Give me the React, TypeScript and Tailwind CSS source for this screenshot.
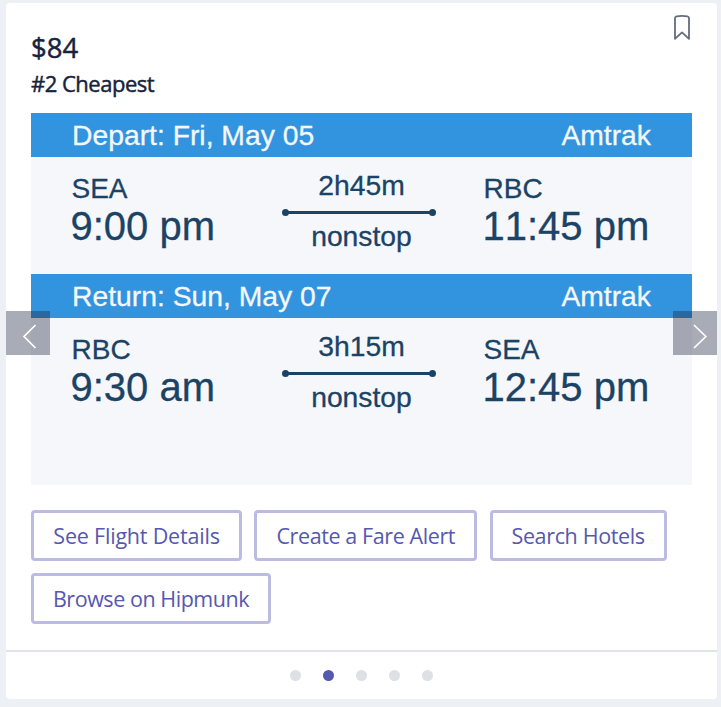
type Leg = {
  title: string;
  from: string;
  departs: string;
  to: string;
  arrives: string;
  duration: string;
};

const legs: Leg[] = [
  { title: "Depart: Fri, May 05", from: "SEA", departs: "9:00 pm", to: "RBC", arrives: "11:45 pm", duration: "2h45m" },
  { title: "Return: Sun, May 07", from: "RBC", departs: "9:30 am", to: "SEA", arrives: "12:45 pm", duration: "3h15m" },
];

const actions = [
  { label: "See Flight Details", box: "w-[211px]", text: "tracking-[-0.2px]" },
  { label: "Create a Fare Alert", box: "w-[223px]", text: "tracking-[-0.4px]" },
  { label: "Search Hotels", box: "w-[177px]", text: "tracking-[-0.35px]" },
  { label: "Browse on Hipmunk", box: "w-[240px]", text: "tracking-[-0.45px]" },
];

function Place({ code, time }: { code: string; time: string }) {
  return (
    <div className="pt-[17px]">
      <div className="pl-px text-[28px] leading-[30px]">{code}</div>
      <div className="mt-[2px] text-[40px] leading-[40px] [font-kerning:none]">{time}</div>
    </div>
  );
}

function LegSection({ leg }: { leg: Leg }) {
  return (
    <section className="h-[161px] whitespace-nowrap text-[#1b4365] [-webkit-text-stroke:0.3px]">
      <header className="flex h-11 items-center justify-between bg-[#3294de] pl-[41px] pr-[41px] text-[28.3px] leading-[44px] text-[#f4f8fc]">
        <span>{leg.title}</span>
        <span>Amtrak</span>
      </header>
      <div className="grid grid-cols-[211.5px_153px_1fr] pl-[39.5px]">
        <Place code={leg.from} time={leg.departs} />
        <div className="flex flex-col items-center pt-[14px] text-[28.3px] leading-[28px]">
          <span className="pl-[6px]">{leg.duration}</span>
          <div className="mb-[6px] mt-[10px] flex h-[7px] w-[154px] items-center">
            <span className="size-[7px] rounded-full bg-current" />
            <span className="-mx-px h-[3px] flex-1 bg-current" />
            <span className="size-[7px] rounded-full bg-current" />
          </div>
          <span className="pl-[6px]">nonstop</span>
        </div>
        <div className="pl-[47.5px]">
          <Place code={leg.to} time={leg.arrives} />
        </div>
      </div>
    </section>
  );
}

export default function App() {
  return (
    <main className="h-[707px] w-[721px] bg-[#edf0f5] pl-[6px] pt-[3px] font-['Open_Sans','Noto_Sans',sans-serif]">
      <article className="relative flex h-[696px] w-[711px] flex-col rounded-[4px] bg-white">
        <div className="flex h-[110px] justify-between pl-[25px] pr-[26px] text-[#16233a]">
          <div className="pt-[27px] [-webkit-text-stroke:0.45px]">
            <h1 className="text-[27.5px] leading-[36px]">$84</h1>
            <h2 className="text-[22px] leading-[34px] tracking-[-0.5px]">#2 Cheapest</h2>
          </div>
          <svg className="mt-[11px] h-[27px] w-[18px]" viewBox="0 0 18 27" fill="none" stroke="#646d7e" strokeWidth="1.8" strokeLinejoin="round">
            <path d="M2 4Q2 2.8 3.6 2.4Q9 1.5 14.4 2.4Q16 2.8 16 4V24.8L9 18.4L2 24.8Z" />
          </svg>
        </div>

        <div className="ml-[25px] h-[372px] w-[661px] bg-[#f5f7fb] font-['Liberation_Sans',Arial,sans-serif]">
          {legs.map((leg) => (
            <LegSection key={leg.title} leg={leg} />
          ))}
        </div>

        <div className="flex h-[165px] flex-wrap content-start gap-x-[12.3px] gap-y-3 pl-[25px] pt-[25px]">
          {actions.map((a) => (
            <button
              key={a.label}
              className={`flex h-[51px] items-center justify-center whitespace-nowrap rounded-[4px] border-[3px] border-[#bcbbe1] pt-[2px] text-[21.5px] text-[#5558af] ${a.box}`}
            >
              <span className={a.text}>{a.label}</span>
            </button>
          ))}
        </div>

        <footer className="flex h-[49px] items-center justify-center gap-[22px] border-t-2 border-[#e1e3e6]">
          {[0, 1, 2, 3, 4].map((i) => (
            <span key={i} className={`size-[11px] rounded-full ${i === 1 ? "bg-[#5558af]" : "bg-[#dfe0e4]"}`} />
          ))}
        </footer>

        <button aria-label="Previous" className="absolute left-0 top-[308px] size-11 bg-[#1b2440]/38">
          <svg className="size-11" viewBox="0 0 44 44" fill="none" stroke="white" strokeWidth="1.7">
            <path d="M29.5 14L18 25.5L29.5 37" />
          </svg>
        </button>
        <button aria-label="Next" className="absolute right-0 top-[308px] size-11 bg-[#1b2440]/38">
          <svg className="size-11" viewBox="0 0 44 44" fill="none" stroke="white" strokeWidth="1.7">
            <path d="M21 14L32.8 25.5L21 37" />
          </svg>
        </button>
      </article>
    </main>
  );
}
